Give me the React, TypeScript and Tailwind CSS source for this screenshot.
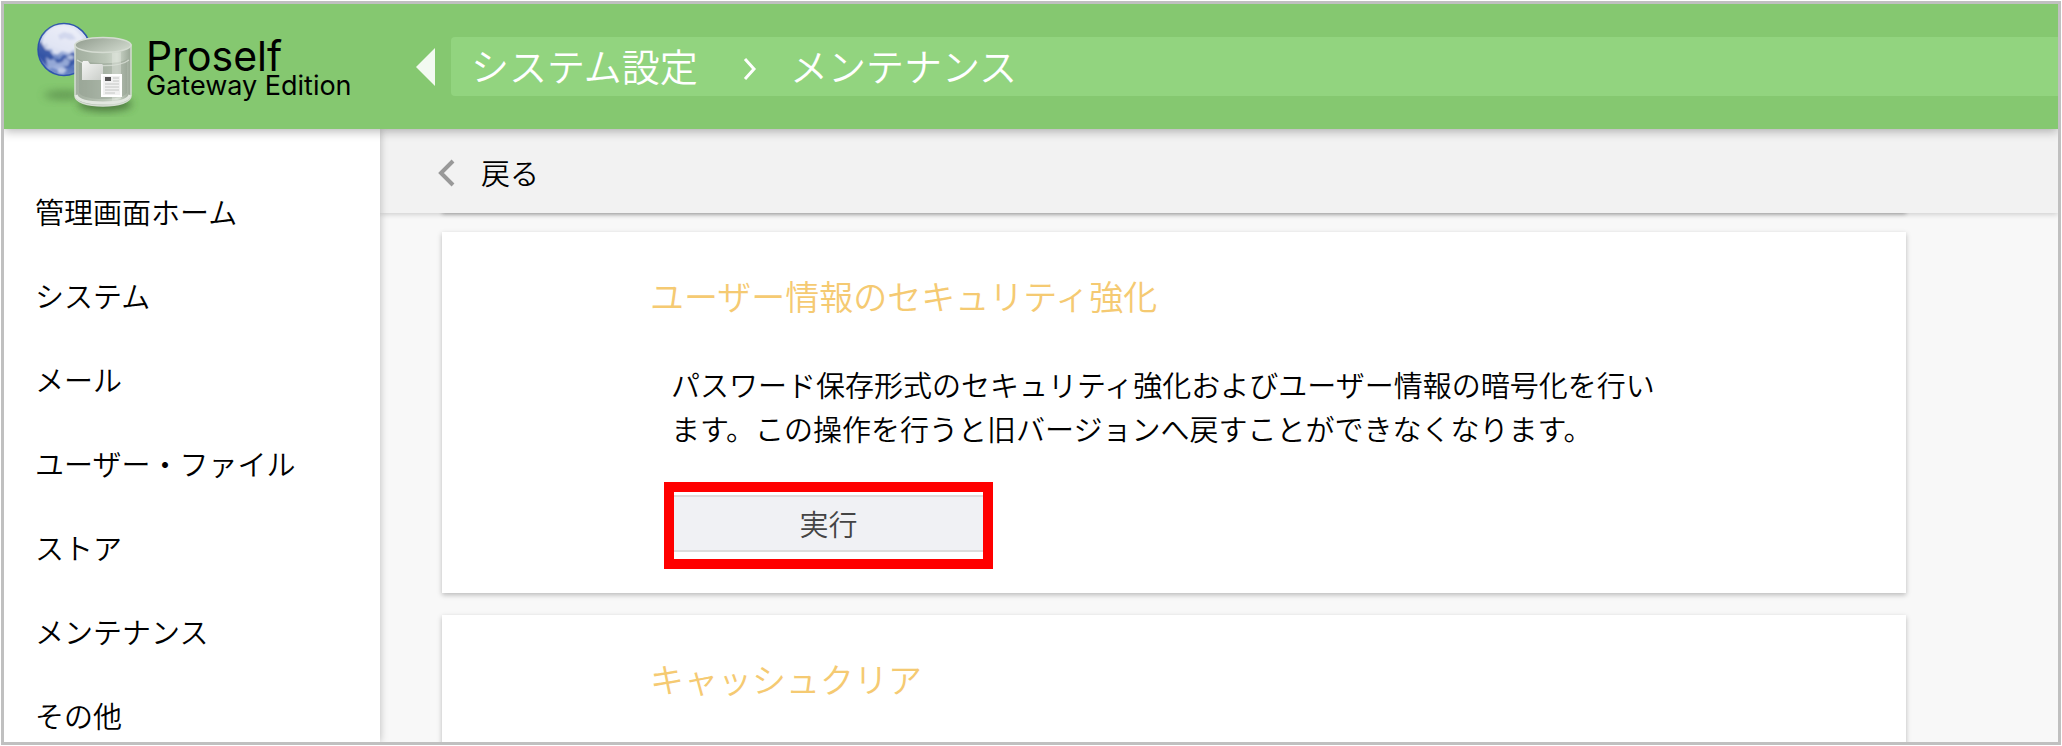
import React from 'react';

const menuItems = [
  '管理画面ホーム',
  'システム',
  'メール',
  'ユーザー・ファイル',
  'ストア',
  'メンテナンス',
  'その他',
];

const Logo: React.FC = () => (
  <svg className="w-[112px] h-[100px] shrink-0" viewBox="30 18 112 100" aria-hidden="true">
    <defs>
      <linearGradient id="globe" x1="0.7" y1="0" x2="0.3" y2="1">
        <stop offset="0" stopColor="#e6e9f6" />
        <stop offset="0.5" stopColor="#b4c1e3" />
        <stop offset="0.75" stopColor="#5775bb" />
        <stop offset="1" stopColor="#7d95cf" />
      </linearGradient>
      <linearGradient id="glass" x1="0" x2="1">
        <stop offset="0" stopColor="#a3afa0" />
        <stop offset="0.2" stopColor="#a9b5a6" />
        <stop offset="0.55" stopColor="#bcc7b9" />
        <stop offset="0.75" stopColor="#cfd8cc" />
        <stop offset="1" stopColor="#98a595" />
      </linearGradient>
      <linearGradient id="lid" x1="0" x2="1" y1="0" y2="0.6">
        <stop offset="0" stopColor="#8f9a8c" />
        <stop offset="1" stopColor="#cbd4c8" />
      </linearGradient>
      <linearGradient id="folder" x1="0" x2="1" y1="0" y2="1">
        <stop offset="0" stopColor="#f4f5f4" />
        <stop offset="1" stopColor="#c9cdc8" />
      </linearGradient>
      <filter id="soft" x="-40%" y="-100%" width="180%" height="300%">
        <feGaussianBlur stdDeviation="4" />
      </filter>
      <filter id="cloud">
        <feGaussianBlur stdDeviation="1" />
      </filter>
      <clipPath id="ball">
        <circle cx="64" cy="50.5" r="26" />
      </clipPath>
    </defs>
    <ellipse cx="64" cy="96" rx="20" ry="4" fill="#4e7d41" opacity="0.7" filter="url(#soft)" />
    <ellipse cx="105" cy="105" rx="27" ry="7" fill="#3d6332" opacity="0.8" filter="url(#soft)" />
    <circle cx="64" cy="50.5" r="26" fill="url(#globe)" stroke="#2f55ac" strokeWidth="1.5" />
    <g clipPath="url(#ball)" filter="url(#cloud)">
      <path d="M36 46l5-3 3 3 3-2 1 7 4 4 2 5 6 1 3-5 5 1 4-4 5 3v8l-10 5-9-3-8 3-9-8-9-10z" fill="#2a4b9f" opacity="0.75" />
      <path d="M46 58l4 3 4-1 3 4 5-1 3-4 5 3-2 5-6 1-3 4-6-3-5 1z" fill="#b4c3e6" opacity="0.75" />
      <path d="M58 70l5-2 4 3-4 4-5-1zM51 53l3-2 3 3-3 2zM66 59l4-3 5 2-4 3z" fill="#cdd7ee" opacity="0.8" />
      <path d="M43 38l5-7 7-4 9-1 10 3 9 9-1 12-9 1-4 3-7-2-5 4-6-6-5 1-4-6z" fill="#f0f2fa" opacity="0.75" />
      <path d="M58 36l6-3 8 2 4 5-6 1-5-2-5 2z" fill="#c9d0ea" opacity="0.7" />
    </g>
    <path d="M75 46v51c0 6 12 10 28 10s28-4 28-10V46z" fill="url(#glass)" stroke="#d5ddd2" strokeWidth="1.5" />
    <path d="M79 60c5 5 42 6 48 0v34c-6 8-42 8-48 0z" fill="#8d998a" opacity="0.4" />
    <path d="M112 54l9-1v47l-9 2z" fill="#edf1eb" opacity="0.35" />
    <path d="M77 61c10 7 42 8 52 0" fill="none" stroke="#d9e0d7" strokeWidth="1.2" opacity="0.8" />
    <path d="M76 96c2 6 12 8 27 8s25-2 27-8" fill="none" stroke="#e2e7e0" strokeWidth="3" />
    <ellipse cx="103" cy="46" rx="28" ry="7.5" fill="url(#lid)" stroke="#d5dcd2" strokeWidth="1.5" />
    <path d="M82 81V64l1-2h5l2 3h12l1 1v15z" fill="url(#folder)" />
    <path d="M101 75h21v23h-21z" fill="#ffffff" />
    <path d="M103 77h17v19h-17z" fill="#f1f1f1" />
    <path d="M105 78h6v4h-6z" fill="#555" />
    <path d="M113 79h6M113 82h6M105 85h14M105 88h14M105 91h14M105 94h10" stroke="#c4c6c4" strokeWidth="1" />
  </svg>
);

const Sidebar: React.FC = () => (
  <nav className="relative z-10 w-[376px] shrink-0 bg-white pl-[31px] pt-[62px] shadow-[0_0_8px_rgba(0,0,0,0.25)]">
    <ul className="flex flex-col gap-11">
      {menuItems.map((item) => (
        <li key={item} className="h-10">
          <a href="#" className="text-[29px] leading-10 text-black">{item}</a>
        </li>
      ))}
    </ul>
  </nav>
);

const Card: React.FC<{ title: string; children?: React.ReactNode }> = ({ title, children }) => (
  <section className="min-h-[361px] shrink-0 bg-white pl-[208px] pr-[230px] pt-10 shadow-[0_2px_5px_rgba(0,0,0,0.25)]">
    <h2 className="text-[34px] leading-12 text-[#f5ca72]">{title}</h2>
    {children}
  </section>
);

const App: React.FC = () => {
  return (
    <div className="h-screen bg-white p-px font-['Noto_Sans_CJK_JP',sans-serif] font-[350]">
      <div className="flex h-full flex-col overflow-hidden border-[3px] border-[#c0c0c0] bg-[#f8f8f8]">
        <header className="relative z-30 flex h-[125px] shrink-0 items-center bg-[#85c870] shadow-[0_2px_10px_rgba(0,0,0,0.3)]">
          <a href="#" className="flex w-[412px] shrink-0 items-center pl-[26px] font-['Inter',sans-serif] font-normal text-black">
            <Logo />
            <span className="flex flex-col pl-1 pt-[6px]">
              <span className="text-[41px] leading-8">Proself</span>
              <span className="text-[27px] leading-7">Gateway Edition</span>
            </span>
          </a>
          <button className="mr-4 shrink-0" aria-label="メニューを閉じる">
            <svg className="h-[38px] w-[19px]" viewBox="0 0 19 38">
              <path d="M19 0v38L0 19z" fill="#f3faf1" />
            </svg>
          </button>
          <div className="flex h-[59px] grow items-center rounded-l bg-[#92d47f] pb-1 pl-5 text-[38px] text-white">
            <a href="#">システム設定</a>
            <svg className="ml-11 mr-8 mt-2 h-6 w-4" viewBox="0 0 16 24" fill="none" stroke="currentColor" strokeWidth="3">
              <path d="M3 2l9 10-9 10" />
            </svg>
            <a href="#">メンテナンス</a>
          </div>
        </header>

        <div className="flex min-h-0 grow">
          <Sidebar />
          <main className="flex min-w-0 grow flex-col">
            <div className="relative z-5 flex h-[84px] shrink-0 items-center bg-[#f2f2f2] pl-[57px] pt-[3px] shadow-[0_1px_6px_rgba(0,0,0,0.2)]">
              <a href="#" className="flex items-center gap-6 text-[29px] text-black">
                <svg className="h-7 w-5" viewBox="0 0 20 28" fill="none" stroke="#999" strokeWidth="4">
                  <path d="M16 2L4 14l12 12" />
                </svg>
                戻る
              </a>
            </div>

            <div className="-mt-4 ml-[62px] mr-[152px] flex grow flex-col gap-[22px]">
              {/* tail of the card scrolled under the bar */}
              <div className="h-[13px] shrink-0 shadow-[0_4px_4px_rgba(0,0,0,0.3)]" />
              <Card title="ユーザー情報のセキュリティ強化">
                <p className="pl-[21px] pt-[42px] text-[29px] leading-11 text-black">
                  パスワード保存形式のセキュリティ強化およびユーザー情報の暗号化を行います。この操作を行うと旧バージョンへ戻すことができなくなります。
                </p>
                <div className="ml-[14px] mt-8 w-[329px] border-[10px] border-[#ff0000] bg-white pb-[7px] pt-[3px]">
                  <button className="h-[57px] w-full border-y-2 border-[#dcdcdc] bg-[#f0f1f4] text-[29px] text-[#444]">実行</button>
                </div>
              </Card>
              <Card title="キャッシュクリア" />
            </div>
          </main>
        </div>
      </div>
    </div>
  );
};

export default App;
